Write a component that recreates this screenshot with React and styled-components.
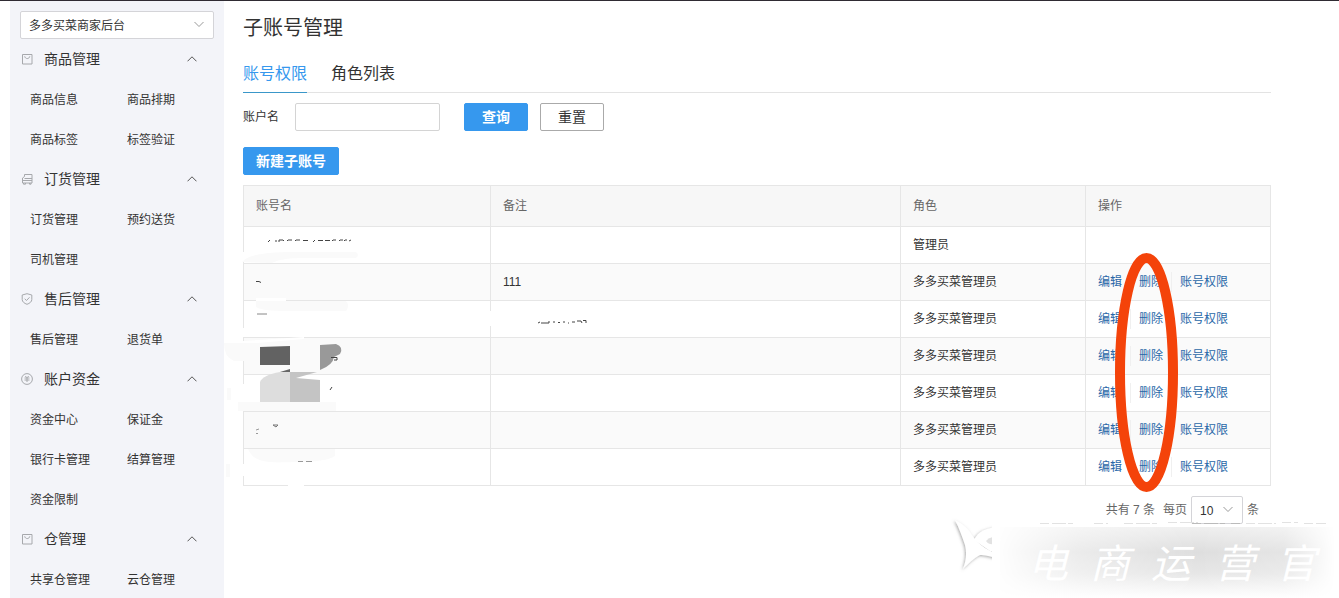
import React, { useState } from 'react'
import styled, { createGlobalStyle } from 'styled-components';

const GlobalStyle = createGlobalStyle`
    * {
        box-sizing: border-box;
    }
    body {
        margin: 0;
        background: #fff;
        color: #333;
        font: 12px/20px "Liberation Sans", "Noto Sans CJK SC", sans-serif;
    }
    button, input, select {
        font: inherit;
        color: inherit;
    }
    a {
        color: inherit;
        text-decoration: none;
    }
`;

const Page = styled.div`
    position: relative;
    display: flex;
    height: 100vh;
    overflow: hidden;
    border-top: 1px solid #2f2b33;
    padding-left: 10px;
`;

const Sidebar = styled.nav`
    flex: 0 0 214px;
    background: #f3f4f9;
    padding-top: 10px;
`;

const SelectBox = styled.div`
    position: relative;
    display: inline-block;
    width: ${props => props.$wide ? '194px' : '52px'};
    margin-left: ${props => props.$wide ? '10px' : '0'};
    vertical-align: top;
`;

const Select = styled.select`
    display: block;
    appearance: none;
    width: 100%;
    height: 28px;
    padding: 2px 8px 0;
    border: 1px solid #d4d4d8;
    border-radius: 2px;
    background: #fff;
    color: #333;
`;

const SelectArrow = styled.svg`
    position: absolute;
    top: 10px;
    right: 10px;
    pointer-events: none;
`;

const GroupTitle = styled.button`
    display: flex;
    align-items: center;
    gap: 11px;
    width: 100%;
    height: 40px;
    padding: 0 27px 0 11px;
    border: none;
    background: none;
    font-size: 14px;
    text-align: left;
    cursor: pointer;
`;

const GroupName = styled.span`
    flex: 1;
`;

const GroupLinks = styled.div`
    display: grid;
    grid-template-columns: 1fr 1fr;
    padding-left: 20px;
`;

const MenuLink = styled.a`
    height: 40px;
    line-height: 42px;
`;

const Main = styled.main`
    flex: 1;
    min-width: 0;
    padding: 10px 68px 0 19px;
`;

const Title = styled.h1`
    margin: 0;
    font-size: 20px;
    font-weight: 400;
    line-height: 34px;
`;

const Tabs = styled.div`
    display: flex;
    gap: 24px;
    margin-top: 8px;
    border-bottom: 1px solid #e3e3e3;
`;

const Tab = styled.button`
    height: 40px;
    margin-bottom: -1px;
    padding: 2px 0 0;
    border: none;
    border-bottom: 1px solid ${props => props.$active ? '#3a97c9' : 'transparent'};
    background: none;
    color: ${props => props.$active ? '#3698ee' : '#333'};
    font-size: 16px;
    cursor: pointer;
`;

const FilterForm = styled.form`
    display: flex;
    align-items: center;
    margin: 10px 0 16px;
`;

const TextInput = styled.input`
    width: 145px;
    height: 28px;
    margin: 0 24px 0 16px;
    padding: 0 8px;
    border: 1px solid #d4d4d4;
    border-radius: 2px;
`;

const Button = styled.button`
    height: 28px;
    min-width: 64px;
    margin-right: 12px;
    padding: 0 12px;
    border: 1px solid ${props => props.$primary ? '#3698ee' : '#aaa'};
    border-radius: 2px;
    background: ${props => props.$primary ? '#3698ee' : '#fff'};
    color: ${props => props.$primary ? '#fff' : '#333'};
    font-size: 14px;
    font-weight: ${props => props.$primary ? 700 : 400};
    line-height: 20px;
    cursor: pointer;
`;

const TableArea = styled.div`
    position: relative;
    margin-top: 10px;
`;

const Table = styled.table`
    width: 100%;
    table-layout: fixed;
    border-collapse: collapse;
`;

const HeadCell = styled.th`
    width: ${props => props.$width};
    height: 41px;
    padding: 0 12px;
    border: 1px solid #e6e6e6;
    background: #f7f7f7;
    color: #666;
    font-weight: 400;
    text-align: left;
`;

const Row = styled.tr`
    height: 37px;
    background: ${props => props.$striped ? '#fafafa' : '#fff'};
`;

const Cell = styled.td`
    padding: 0 12px;
    border: 1px solid #e6e6e6;
`;

const Actions = styled.div`
    display: flex;
    color: #2a68a8;
`;

const ActionLink = styled.a`
    & + & {
        margin-left: 8px;
        padding-left: 8px;
        border-left: 1px solid #f0f0f0;
    }
`;

const Smudges = styled.svg`
    position: absolute;
    top: 40px;
    left: -24px;
    pointer-events: none;
`;

const Circled = styled.svg`
    position: absolute;
    top: 67px;
    right: 92px;
    pointer-events: none;
`;

const Pager = styled.div`
    display: flex;
    justify-content: flex-end;
    align-items: center;
    gap: 4px;
    padding: 10px 12px 0 0;
    color: #666;
`;

const Total = styled.span`
    margin-right: 4px;
`;

const Watermark = styled.svg`
    position: absolute;
    right: 0;
    bottom: 0;
    pointer-events: none;
`;

const groups = [
    { name: '商品管理', icon: 'bag', links: ['商品信息', '商品排期', '商品标签', '标签验证'] },
    { name: '订货管理', icon: 'truck', links: ['订货管理', '预约送货', '司机管理'] },
    { name: '售后管理', icon: 'shield', links: ['售后管理', '退货单'] },
    { name: '账户资金', icon: 'coin', links: ['资金中心', '保证金', '银行卡管理', '结算管理', '资金限制'] },
    { name: '仓管理', icon: 'bag', links: ['共享仓管理', '云仓管理'] },
];

const rows = [
    { id: 1, remark: '', role: '管理员', editable: false },
    { id: 2, remark: '111', role: '多多买菜管理员', editable: true },
    { id: 3, remark: '', role: '多多买菜管理员', editable: true },
    { id: 4, remark: '', role: '多多买菜管理员', editable: true },
    { id: 5, remark: '', role: '多多买菜管理员', editable: true },
    { id: 6, remark: '', role: '多多买菜管理员', editable: true },
    { id: 7, remark: '', role: '多多买菜管理员', editable: true },
];

const icons = {
    bag: <><path d="M1.500 1.500h9.500v9.500h-9.500z" /><path d="M3.700 3.300c.5 3 4.600 3 5.100 0" /></>,
    truck: <><path d="M3.500 1.500h7.500v8.500h-9.500v-5l2-1.500zM3.500 5.500h7.500M1.500 7.500h9.500" /><path d="M2.500 10v1.200h2V10M8.500 10v1.200h1.500V10" /></>,
    shield: <><path d="M6 .7l4.800 1.300v4.500c0 2.200-2 3.800-4.800 4.800-2.800-1-4.800-2.600-4.800-4.800V2z" /><path d="M3.700 5.800l1.800 1.700 3-3.200" /></>,
    coin: <><circle cx="6" cy="6" r="5.400" /><path d="M4.300 3l1.700 1.800L7.700 3M3.500 5h5M3.500 7h5M6 5v4" /></>,
};

function MenuGroup({ group }) {
    const [open, setOpen] = useState(true);

    return (
        <div>
            <GroupTitle type="button" aria-expanded={open} onClick={() => setOpen(!open)}>
                <svg width="12" height="12" viewBox="0 0 12 12" fill="none" stroke="#a6a8ac" strokeWidth="1">{icons[group.icon]}</svg>
                <GroupName>{group.name}</GroupName>
                <svg width="10" height="6" viewBox="0 0 10 6" fill="none" stroke="#555">
                    <path d={open ? 'M.5 5.300L5 .8l4.500 4.500' : 'M.5 .8L5 5.300 9.500 .8'} />
                </svg>
            </GroupTitle>
            {open && (
                <GroupLinks>
                    {group.links.map(link => <MenuLink key={link} href="#">{link}</MenuLink>)}
                </GroupLinks>
            )}
        </div>
    )
}

function DropDown({ wide, label, options }) {
    return (
        <SelectBox $wide={wide}>
            <Select aria-label={label}>
                {options.map(option => <option key={option}>{option}</option>)}
            </Select>
            <SelectArrow width="10" height="7" viewBox="0 0 10 7" fill="none" stroke="#999">
                <path d="M.5 1L5 5.500 9.500 1" />
            </SelectArrow>
        </SelectBox>
    )
}

export default function App() {
    const [tab, setTab] = useState('账号权限');
    const [account, setAccount] = useState('');

    return (
        <Page>
            <GlobalStyle />
            <Sidebar>
                <DropDown wide label="后台" options={['多多买菜商家后台']} />
                {groups.map(group => <MenuGroup key={group.name} group={group} />)}
            </Sidebar>
            <Main>
                <Title>子账号管理</Title>
                <Tabs role="tablist">
                    {['账号权限', '角色列表'].map(name => (
                        <Tab key={name} type="button" role="tab" aria-selected={tab === name} $active={tab === name} onClick={() => setTab(name)}>{name}</Tab>
                    ))}
                </Tabs>
                <FilterForm onSubmit={(e) => e.preventDefault()}>
                    <label htmlFor="account">账户名</label>
                    <TextInput id="account" type="text" value={account} onChange={(e) => setAccount(e.target.value)} />
                    <Button type="submit" $primary>查询</Button>
                    <Button type="button" onClick={() => setAccount('')}>重置</Button>
                </FilterForm>
                <Button type="button" $primary>新建子账号</Button>
                <TableArea>
                    <Table>
                        <thead>
                            <tr>
                                <HeadCell $width="247px">账号名</HeadCell>
                                <HeadCell $width="auto">备注</HeadCell>
                                <HeadCell $width="185px">角色</HeadCell>
                                <HeadCell $width="185px">操作</HeadCell>
                            </tr>
                        </thead>
                        <tbody>
                            {rows.map((row, i) => (
                                <Row key={row.id} $striped={i % 2 === 1}>
                                    <Cell />
                                    <Cell>{row.remark}</Cell>
                                    <Cell>{row.role}</Cell>
                                    <Cell>
                                        {row.editable && (
                                            <Actions>
                                                <ActionLink href="#">编辑</ActionLink>
                                                <ActionLink href="#">删除</ActionLink>
                                                <ActionLink href="#">账号权限</ActionLink>
                                            </Actions>
                                        )}
                                    </Cell>
                                </Row>
                            ))}
                        </tbody>
                    </Table>
                    {/* account names rubbed out by hand */}
                    <Smudges width="400" height="266" viewBox="219 225 400 266" aria-hidden="true">
                        <g fill="#fff">
                            <path d="M240 252h6v10h-6zM246 262h35v-2h-35z" />
                            <path d="M256 298h30v5h-30zM240 328h22v9h-22zM485 311h12v15h-12z" />
                            <path d="M224 341h20l60-4v2l-60 5-20 2z" />
                            <path d="M240 384h14v20h-14zM240 464h8v12h-8zM288 483h16v5h-16z" />
                        </g>
                        <g fill="#fafafa">
                            <path d="M242 262c8-9 30-10 60-10h54q4 3 0 6h-50c-20 0-28 2-34 5z" />
                            <path d="M256 301h90q4 5 0 10h-50c-20 0-34 0-40-4z" />
                            <path d="M224 343h30v18h-20q-10-4-10-18zM238 402h98v9h-98z" />
                            <path d="M248 449c6 14 20 14 45 13 25 0 35-2 42-6v-7z" />
                            <path d="M227 388h4v12h-4zM226 464h4v13h-4z" />
                        </g>
                        <path d="M260 347l30-1v19h-30z" fill="#626262" />
                        <path d="M320 345l16-1q8 3 4 10l-6 3q-1 8-14 13z" fill="#999" />
                        <path d="M280 372l10-3v3z" fill="#666" />
                        <path d="M260 402v-20q3-7 20-10h10v30z" fill="#ddd" />
                        <path d="M290 372h27l-21 6 24 2v22h-30z" fill="#c4c4c4" />
                        <g fill="none" stroke="#444">
                            <path d="M268 242l2-2M276 242v-2M279 242v-2l4 0 1 1M287 241l1-1h4M295 241l1-1h4M303 240.500h5M313 242l2-2M318 240.500h5M325 240.500h5M332 241l1-1h3M339 241l1-1h3M344 241l1-1h2M349 241l2-1" />
                            <path d="M256 281.500h3l2 1" />
                            <path d="M257 314h10" stroke="#888" />
                            <path d="M331 357.500h6v2.500h-3M330 390l2-3" />
                            <path d="M273 425h5l-2 2z" stroke="#777" />
                            <path d="M256 430l3-1M256 433.500h2" stroke="#999" />
                            <path d="M538 323l2-1M541 323h8v-2M553 322h2M558 322.500h2M563 322h2M568 323h1M572 322h3M577 321h4l1 2M583 320.500h3v2.500" />
                            <path d="M298 461.500h5M306 461.500h6" stroke="#999" />
                        </g>
                    </Smudges>
                    <Circled width="64" height="242" viewBox="0 0 64 242" fill="none" aria-hidden="true">
                        <ellipse cx="31.500" cy="120.500" rx="26.500" ry="114.500" stroke="#f4430a" strokeWidth="10" />
                    </Circled>
                </TableArea>
                <Pager>
                    <Total>共有 7 条</Total>
                    每页
                    <DropDown label="每页条数" options={['10', '20', '50']} />
                    条
                </Pager>
            </Main>
            <Watermark width="400" height="82" viewBox="939 516 400 82" aria-hidden="true">
                <defs>
                    <linearGradient id="haze" x1="0" y1="0" x2="0" y2="1">
                        <stop offset="0" stopColor="#efefef" />
                        <stop offset="0.350" stopColor="#dedede" />
                        <stop offset="0.650" stopColor="#e6e6e6" />
                        <stop offset="1" stopColor="#fff" />
                    </linearGradient>
                    <linearGradient id="sides">
                        <stop offset="0" stopColor="#000" />
                        <stop offset="0.250" stopColor="#999" />
                        <stop offset="0.600" stopColor="#fff" />
                        <stop offset="0.850" stopColor="#ccc" />
                        <stop offset="1" stopColor="#000" />
                    </linearGradient>
                    <mask id="fade">
                        <rect x="992" y="520" width="343" height="78" fill="url(#sides)" />
                    </mask>
                    <filter id="shade" x="-20%" y="-20%" width="140%" height="140%">
                        <feDropShadow dx="-1" dy="1" stdDeviation="1.500" floodColor="#777" floodOpacity="0.600" />
                    </filter>
                    <clipPath id="logo">
                        <path d="M939 516h53v82h-53z" />
                    </clipPath>
                </defs>
                <g clipPath="url(#logo)">
                    <g fill="#fff" filter="url(#shade)">
                        <path d="M974 540c4-9 14-13 26-13v24h-10z" />
                        <path d="M955 520c8 4 13 8 17 15 5 8 12 14 28 20v5c-9-4-15-5-20-5-6 3-12 9-17 14 3-8 4-16 2-24-3-9-6-17-10-25z" />
                    </g>
                    <path d="M986 541q3-4 8-4v7q-5 1-8-3z" fill="#e2e2e2" />
                </g>
                <path d="M1000 527h335v71h-335z" fill="url(#haze)" mask="url(#fade)" />
                <g fill="none" stroke="#e2e2e2" strokeDasharray="9 3 14 2 5 6">
                    <path d="M1040 523.500h38M1094 523.500h14M1124 523.500h34M1168 522.500h30" />
                    <path d="M1192 523.500h50" stroke="#bbb" />
                    <path d="M1246 523.500h30M1282 522.500h16M1304 523.500h22" />
                </g>
                <g fill="#fff" fontFamily="'Noto Sans CJK SC', sans-serif" fontSize="40" fontStyle="italic">
                    <text x="1028" y="578">电</text>
                    <text x="1090" y="578">商</text>
                    <text x="1151" y="578">运</text>
                    <text x="1215" y="578">营</text>
                    <text x="1276" y="578">官</text>
                </g>
            </Watermark>
        </Page>
    )
}
